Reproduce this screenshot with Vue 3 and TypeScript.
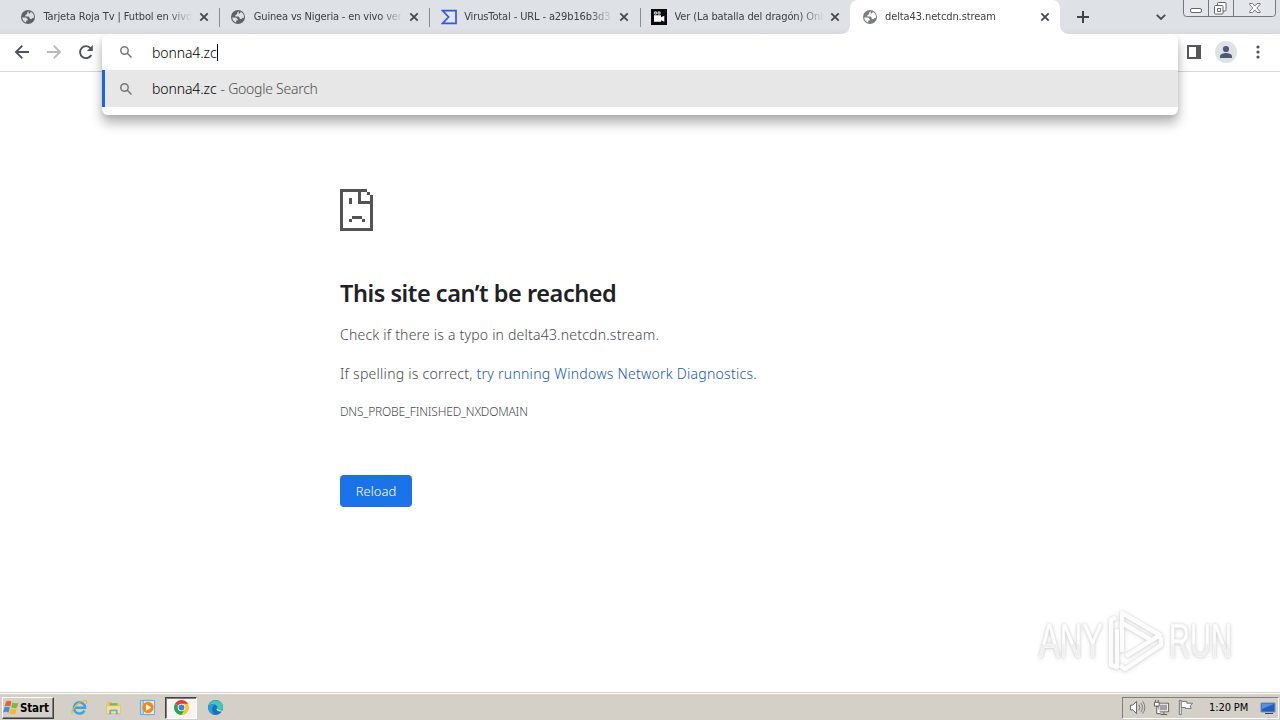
<script setup lang="ts">
interface Tab {
  title: string
  icon: 'globe' | 'vt' | 'camera'
  spacing: string
  active?: boolean
}

const tabs: Tab[] = [
  { title: 'Tarjeta Roja Tv | Futbol en vivo', icon: 'globe', spacing: '-0.1px' },
  { title: 'Guinea vs Nigeria - en vivo ver', icon: 'globe', spacing: '-0.16px' },
  { title: 'VirusTotal - URL - a29b16b3d3', icon: 'vt', spacing: '-0.12px' },
  { title: 'Ver (La batalla del dragón) Onli', icon: 'camera', spacing: '-0.12px' },
  { title: 'delta43.netcdn.stream', icon: 'globe', spacing: '-0.1px', active: true },
]
</script>

<template>
  <div class="screen">
    <header class="strip">
      <div v-for="(tab, i) in tabs" :key="i" class="tab" :class="{ active: tab.active, before: i === 3 }">
        <svg v-if="tab.icon === 'globe'" class="fav" viewBox="0 0 16 16">
          <circle cx="8" cy="8" r="7" :fill="tab.active ? '#7b7e82' : '#5f6368'" />
          <path d="M8.6 2.1 7.2 3.5v1.4L5.3 6.2v1.3h3.2l1.3 1.4v1.2h1.6l1-1h1.4A5.9 5.9 0 0 0 10.8 2.8L9.9 4.6H8.6zM2.2 8.4 6 8.6l1.8 1.7-.3 1.2H6.2v1.9A5.8 5.8 0 0 1 2.2 8.4z" :fill="tab.active ? '#fff' : '#dee1e6'" />
        </svg>
        <svg v-else-if="tab.icon === 'vt'" class="fav" viewBox="0 0 16 16">
          <path d="M1.500 1.700h13.500v12.600h-13.500L7.600 8z" fill="#e1e6f6" stroke="#3d55dc" stroke-width="1.700" />
        </svg>
        <svg v-else class="fav" viewBox="0 0 16 16">
          <path d="M0 0h16v16H0z" fill="#080a0c" />
          <circle cx="4.4" cy="4" r="1.7" fill="#d8d8d8" /><circle cx="8" cy="4" r="1.7" fill="#d8d8d8" />
          <path d="M3 6.2h7v2l3.3-1.500v6L10 11.300v1.500H3z" fill="#fff" />
          <circle cx="4.4" cy="4" r=".6" fill="#080a0c" /><circle cx="8" cy="4" r=".6" fill="#080a0c" />
        </svg>
        <span class="title" :style="{ letterSpacing: tab.spacing }">{{ tab.title }}</span>
        <svg class="close" viewBox="0 0 10 10"><path d="m1.3 1.3 7.4 7.4m0-7.4L1.3 8.7" /></svg>
      </div>
      <svg class="plus" viewBox="0 0 12 12"><path d="M6 0v12M0 6h12" /></svg>
      <svg class="chevron" viewBox="0 0 10 6"><path d="m.8.8 4.2 4.2L9.2.8" /></svg>
      <svg class="winctl" viewBox="0 0 94 17">
        <path d="M.5 0v13.500q0 3 3 3h86q3 0 3-3V0M25.500 0v16.500M50.500 0v16.500" fill="#e3e6ea" stroke="#737780" />
        <rect x="7.500" y="8.500" width="11" height="4" rx="1.500" fill="#fff" stroke="#62666d" />
        <rect x="34.500" y="2.500" width="8.500" height="8.500" rx="1" fill="#fff" stroke="#62666d" />
        <rect x="31.500" y="5.500" width="8.500" height="8.500" rx="1" fill="#fff" stroke="#62666d" />
        <path d="M34.500 8.500h3v3h-3z" fill="none" stroke="#62666d" />
        <path d="M66.500 3.500h3l2.300 2.500 2.300-2.500h3v1L73.800 8l3.300 3.500v1h-3L71.800 10l-2.300 2.500h-3v-1L69.800 8l-3.300-3.500z" fill="#fff" stroke="#70747b" />
      </svg>
    </header>

    <div class="toolbar">
      <svg class="nav" viewBox="0 0 16 16"><path d="M15 8H2m6.300-6.300L2 8l6.300 6.300" stroke="#50545a" /></svg>
      <svg class="nav" viewBox="0 0 16 16"><path d="M1 8h13M7.700 1.700 14 8l-6.300 6.300" stroke="#b9bbbe" /></svg>
      <svg class="nav" viewBox="0 0 16 16"><path d="M13.300 11A6 6 0 1 1 12.600 4.200" stroke="#50545a" /><path d="M14.800 1v6h-6z" fill="#50545a" stroke="none" /></svg>
      <div class="tools">
        <svg class="side" viewBox="0 0 14 14"><path d="M1 1h12v12H1z" fill="#fff" stroke="#55575c" stroke-width="2" /><path d="M9 1h4v12H9z" fill="#55575c" /></svg>
        <svg class="avatar" viewBox="0 0 22 22"><circle cx="11" cy="11" r="11" fill="#dee1e6" /><circle cx="11" cy="8" r="3.100" fill="#4e5a75" /><path d="M5 17v-1.800C5 13 9 12 11 12s6 1 6 3.200V17z" fill="#4e5a75" /></svg>
        <svg class="dots" viewBox="0 0 4 14"><circle cx="2" cy="2" r="1.600" /><circle cx="2" cy="7" r="1.600" /><circle cx="2" cy="12" r="1.600" /></svg>
      </div>
    </div>

    <div class="omnibox">
      <div class="row">
        <svg class="mag" viewBox="0 0 12 12"><circle cx="4.500" cy="4.500" r="3.700" /><path d="m7.300 7.300 4.200 4.200" /></svg>
        <span class="query">bonna4.zc</span><i class="caret"></i>
      </div>
      <div class="row picked">
        <svg class="mag" viewBox="0 0 12 12"><circle cx="4.500" cy="4.500" r="3.700" /><path d="m7.300 7.300 4.200 4.200" /></svg>
        <span class="query">bonna4.zc</span><span class="hint">- Google Search</span>
      </div>
    </div>

    <main class="page">
      <svg class="sad" viewBox="0 0 33 42"><path fill="#535353" d="M0 0h27v3h-6v9h9V6h3v36H0zM3 3v36h27V15H18V3zM27 3h3v3h-3zM9 9h3v6H9zM12 27h10v3H12zM9 30h3v3H9zM22 30h3v3h-3z" fill-rule="evenodd" /></svg>
      <h1>This site can’t be reached</h1>
      <p class="check">Check if there is a typo in delta43.netcdn.stream.</p>
      <p class="diag">If spelling is correct, <a>try running Windows Network Diagnostics</a>.</p>
      <div class="code">DNS_PROBE_FINISHED_NXDOMAIN</div>
      <button>Reload</button>
    </main>

    <svg class="mark" viewBox="0 0 210 76">
      <defs>
        <linearGradient id="fade" x1="0" y1="0" x2="0" y2="1"><stop offset=".55" stop-color="#fff" /><stop offset=".58" stop-color="#efefef" /></linearGradient>
      </defs>
      <g fill="url(#fade)" stroke="#f7f7f7" stroke-width=".8">
        <text x="9" y="53" textLength="64" lengthAdjust="spacingAndGlyphs">ANY</text>
        <text x="139" y="53" textLength="63" lengthAdjust="spacingAndGlyphs">RUN</text>
      </g>
      <g fill="none" stroke="#fcfcfc" stroke-width="4.500" stroke-linejoin="round">
        <path d="M86 13l-5 3v45l6 2V25" />
        <path d="M92 48V9l38 22-34 21M92 19l31 18M90 61l5 4 36-24v-8" />
      </g>
    </svg>

    <footer class="taskbar">
      <div class="start">
        <svg viewBox="0 0 17 16">
          <path d="M3 2q3-1.500 5.500.3L7.200 7.200Q4.500 5.500 1.700 7z" fill="#e9602c" />
          <path d="M9.500 3q3 1.500 6 0l-1.400 5q-3 1.400-5.800-.2z" fill="#7eb83c" />
          <path d="M1.400 8q3-1.400 5.500.2l-1.400 5Q3 11.500 0 13z" fill="#3d91db" />
          <path d="M8 9q3 1.600 5.800.2l-1.400 5q-3 1.300-5.800-.3z" fill="#f5b922" />
        </svg>
        <span>Start</span>
      </div>
      <div class="apps">
        <div class="app">
          <svg viewBox="0 0 18 18"><path d="M14.300 12.300A6 6 0 1 1 15 9.300H4" fill="none" stroke="#3aa5df" stroke-width="2.600" /><path d="M1.500 16C-1 13 7 2.500 14.500 1.600q3.300-.2 1.600 3.500" fill="none" stroke="#e8b93b" stroke-width="1.300" /></svg>
        </div>
        <div class="app">
          <svg viewBox="0 0 18 18"><path d="M2 3h5l1 1.500h7V15H2z" fill="#e7c35c" /><path d="M5 4.500h8V8H5z" fill="#6fb56c" /><path d="M1.500 7h15v8.500h-15z" fill="#f7e08e" stroke="#d9b857" stroke-width=".6" /><path d="M4.500 16.500v-4q0-1.500 1.500-1.500h6q1.500 0 1.500 1.500v4h-2V13h-5v3.500z" fill="#65b2df" /></svg>
        </div>
        <div class="app">
          <svg viewBox="0 0 18 18"><path d="M1.500 1.500h12v15h-12z" fill="#bcdcf4" stroke="#6ba4d4" /><path d="M4.500 1.500h12v15h-12z" fill="#d7ebfa" stroke="#6ba4d4" /><circle cx="9.500" cy="9" r="6" fill="#f28a1c" /><path d="m7.500 5.500 5.500 3.500-5.500 3.500z" fill="#fff" /></svg>
        </div>
        <div class="app pressed">
          <svg viewBox="0 0 18 18"><path d="M9 9 2.100 5A8 8 0 0 1 15.900 5z" fill="#e23c31" /><path d="M9 9 2.100 5A8 8 0 0 0 9 17l4-6z" fill="#2fa24c" /><path d="M9 5h6.900A8 8 0 0 1 9 17l3.500-6z" fill="#f8c81c" /><circle cx="9" cy="9" r="4" fill="#fff" /><circle cx="9" cy="9" r="3.100" fill="#3f7de8" /></svg>
        </div>
        <div class="app">
          <svg viewBox="0 0 18 18"><circle cx="9" cy="9" r="8" fill="#1673bd" /><path d="M1.200 8A8 8 0 0 1 17 8q.3 4-4 4-3.500 0-2.500-1.500Q12 8 9 6.200 5 4.500 1.200 8z" fill="#43c5b7" /><path d="M1.200 8Q5 4.300 8.500 6.200 3 9 7 16.700 1 15 1.200 8z" fill="#279ce0" /><path d="M10.500 10.500q.5 2.200 5.500 2.200" fill="none" stroke="#d4e4e8" stroke-width="1.300" /></svg>
        </div>
      </div>
      <div class="tray">
        <svg class="snd" viewBox="0 0 18 18"><path d="M1.500 6.500H4l4-4v13l-4-4H1.500z" fill="#fff" stroke="#606060" /><path d="M10.500 6q2 3 0 6m2-8q3.500 5 0 10m2-11.500q4.500 6.500 0 13" fill="none" stroke="#777" /></svg>
        <svg class="net" viewBox="0 0 18 18"><path d="M5.500 4.500h11v9h-11z" fill="#a2a2a2" stroke="#555" /><path d="M6.500 5.500h9v7h-9z" fill="none" stroke="#fff" /><path d="M8 16.500h7M11.500 14v2" stroke="#555" /><path d="M1.500 3.500h5v4h-5zM4 7.500v8h4M2.500 1v2M5.500 1v2" fill="#fff" stroke="#555" /></svg>
        <svg class="flag" viewBox="0 0 18 18"><path d="M2.500 1.500h2v15h-2z" fill="#fff" stroke="#707070" /><path d="M4.500 2.500h6v2h6l-2.500 3 1 2.500h-6v-1h-4.500z" fill="#fff" stroke="#707070" /></svg>
        <span class="clock">1:20 PM</span>
        <svg class="desk" viewBox="0 0 16 16"><path d="M1 3h14v9H1z" fill="#1e5fbf" stroke="#7d93ad" /><path d="M2 4h12L2 9z" fill="#4b96e6" /><path d="M5 13.500h8" stroke="#31465e" /></svg>
      </div>
    </footer>
  </div>
</template>

<style>
html,
body {
  margin: 0;
  overflow: hidden;
  background: #fff;
}
</style>

<style scoped>
.screen {
  position: relative;
  display: flex;
  flex-direction: column;
  width: 1280px;
  height: 720px;
  overflow: hidden;
  background: #fff;
  font-family: "Noto Sans", "Open Sans", sans-serif;
}
svg { display: block; flex: none; }
.strip {
  display: flex;
  box-sizing: border-box;
  height: 34px;
  padding-left: 8.500px;
  background: linear-gradient(#dee1e6 28px, #d8dae0);
}
.tab {
  position: relative;
  display: flex;
  align-items: center;
  box-sizing: border-box;
  width: 210.400px;
  height: 34px;
  flex: none;
  padding-left: 11.500px;
}
.tab:not(.active):not(.before)::after {
  content: '';
  position: absolute;
  right: -1px;
  top: 8px;
  width: 1px;
  height: 19px;
  background: #878b92;
}
.tab.active {
  background: #fff;
  border-radius: 8px 8px 0 0;
}
.tab.active::before,
.tab.active::after {
  content: '';
  position: absolute;
  bottom: 0;
  width: 8px;
  height: 8px;
}
.tab.active::before { left: -8px; background: radial-gradient(circle at 0 0, transparent 7.5px, #fff 8px); }
.tab.active::after { right: -8px; background: radial-gradient(circle at 100% 0, transparent 7.500px, #fff 8px); }
.fav { width: 16px; height: 16px; }
.title {
  width: 149px;
  margin-left: 7.400px;
  overflow: hidden;
  white-space: nowrap;
  font: 11px/18px "DejaVu Sans Condensed", "DejaVu Sans", sans-serif;
  font-stretch: condensed;
  color: #3c4043;
  mask-image: linear-gradient(90deg, #000 125px, transparent 149px);
}
.close { width: 10px; height: 10px; margin-left: 6.300px; }
.close path { stroke: #45484e; stroke-width: 1.8; }
.plus { width: 12px; height: 12px; margin: 11px 0 0 16.500px; }
.plus path { stroke: #3f434a; stroke-width: 2; }
.chevron { width: 10px; height: 6px; margin: 14px 0 0 67px; }
.chevron path { fill: none; stroke: #484c52; stroke-width: 1.800; }
.winctl { width: 94px; height: 17px; margin: 0 3px 0 auto; }
.toolbar {
  display: flex;
  align-items: center;
  gap: 16px;
  box-sizing: border-box;
  height: 38px;
  padding: 0 20px 2px 14px;
  border-bottom: 1px solid #d6d7d9;
}
.nav { width: 16px; height: 16px; }
.nav path { fill: none; stroke-width: 1.900; }
.nav path[fill] { fill: #50545a; }
.tools { display: flex; align-items: center; margin-left: auto; }
.side { width: 14px; height: 14px; }
.avatar { width: 22px; height: 22px; margin-left: 14px; }
.dots { width: 4px; height: 14px; margin-left: 19px; fill: #505359; }
.omnibox {
  position: absolute;
  left: 102px;
  top: 34px;
  width: 1076px;
  height: 81px;
  border-radius: 6px;
  background: #fff;
  box-shadow: 0 8px 12px rgba(0, 0, 0, .3), 0 1px 5px rgba(0, 0, 0, .08);
  clip-path: inset(0 -20px -28px -20px);
}
.row {
  display: flex;
  align-items: center;
  box-sizing: border-box;
  height: 36px;
  padding-left: 18px;
  font-size: 14px;
  font-weight: 300;
  white-space: nowrap;
}
.picked { height: 37px; padding-left: 15px; border-left: 3px solid #1a67dc; background: #e7e7e7; }
.mag { width: 12px; height: 12px; fill: none; stroke: #74777b; stroke-width: 1.500; }
.query { margin-left: 20px; color: #000; letter-spacing: -.1px; }
.caret { width: 1px; height: 17px; background: #000; }
.hint { margin-left: 4px; color: #505050; letter-spacing: -.25px; }
.page {
  display: flex;
  flex-direction: column;
  align-items: flex-start;
  flex: 1;
  padding: 117px 0 0 340px;
  color: #46494d;
  font-size: 15px;
  white-space: nowrap;
}
.sad { width: 33px; height: 42px; }
h1 { margin: 46px 0 0; font-size: 23.500px; font-weight: 600; line-height: 32px; color: #202124; letter-spacing: -.45px; }
p { margin: 0; line-height: 20px; font-size: 14px; font-weight: 300; }
.check { margin-top: 16px; letter-spacing: .21px; }
.diag { margin-top: 19px; letter-spacing: .26px; }
a { color: #1058bd; }
.code { margin-top: 19px; font-size: 12px; font-weight: 300; line-height: 18px; letter-spacing: -.18px; }
button {
  width: 72px;
  height: 32px;
  margin-top: 54px;
  padding: 0;
  border: 0;
  border-radius: 4px;
  background: #1a73e8;
  color: #fff;
  font: 300 13px/32px "Noto Sans", sans-serif;
}
.mark {
  position: absolute;
  left: 1030px;
  top: 604px;
  width: 210px;
  height: 76px;
  overflow: visible;
  filter: drop-shadow(0 0 1px rgba(0, 0, 0, .14)) drop-shadow(0 1px 2px rgba(0, 0, 0, .13));
  font: 48px "Liberation Sans Narrow", "Liberation Sans", sans-serif;
}
.taskbar {
  display: flex;
  align-items: center;
  box-sizing: border-box;
  height: 28px;
  padding: 3px 1px 1px 2px;
  border-top: 1px solid #d4d0c8;
  background: #d4d0c8;
  box-shadow: inset 0 1px #fff;
  font-family: "DejaVu Sans Condensed", "DejaVu Sans", sans-serif;
  font-stretch: condensed;
  font-size: 11px;
  color: #000;
}
.start {
  display: flex;
  align-items: center;
  box-sizing: border-box;
  width: 52px;
  height: 22px;
  border: 1px solid;
  border-color: #fff #404040 #404040 #fff;
  box-shadow: inset -1px -1px #808080;
  font-weight: bold;
}
.start svg { width: 17px; height: 17px; }
.start span { font-size: 11.500px; letter-spacing: -.15px; }
.apps { display: flex; gap: 2px; margin-left: 9px; }
.app { display: flex; align-items: center; justify-content: center; box-sizing: border-box; width: 32px; height: 22px; }
.app svg { width: 17px; height: 17px; }
.pressed { border: 1px solid; border-color: #404040 #fff #fff #404040; background: #f5f4f2; box-shadow: inset 1px 1px #808080; }
.tray {
  display: flex;
  align-items: center;
  box-sizing: border-box;
  width: 157px;
  height: 22px;
  margin-left: auto;
  padding-left: 6px;
  border: 1px solid;
  border-color: #808080 #fff #fff #808080;
}
.tray svg { width: 17px; height: 17px; }
.net, .flag { margin-left: 7px; }
.clock { width: 41px; margin-left: 15px; white-space: nowrap; letter-spacing: -.1px; }
.tray .desk { width: 16px; height: 16px; margin-left: 10px; }
</style>
